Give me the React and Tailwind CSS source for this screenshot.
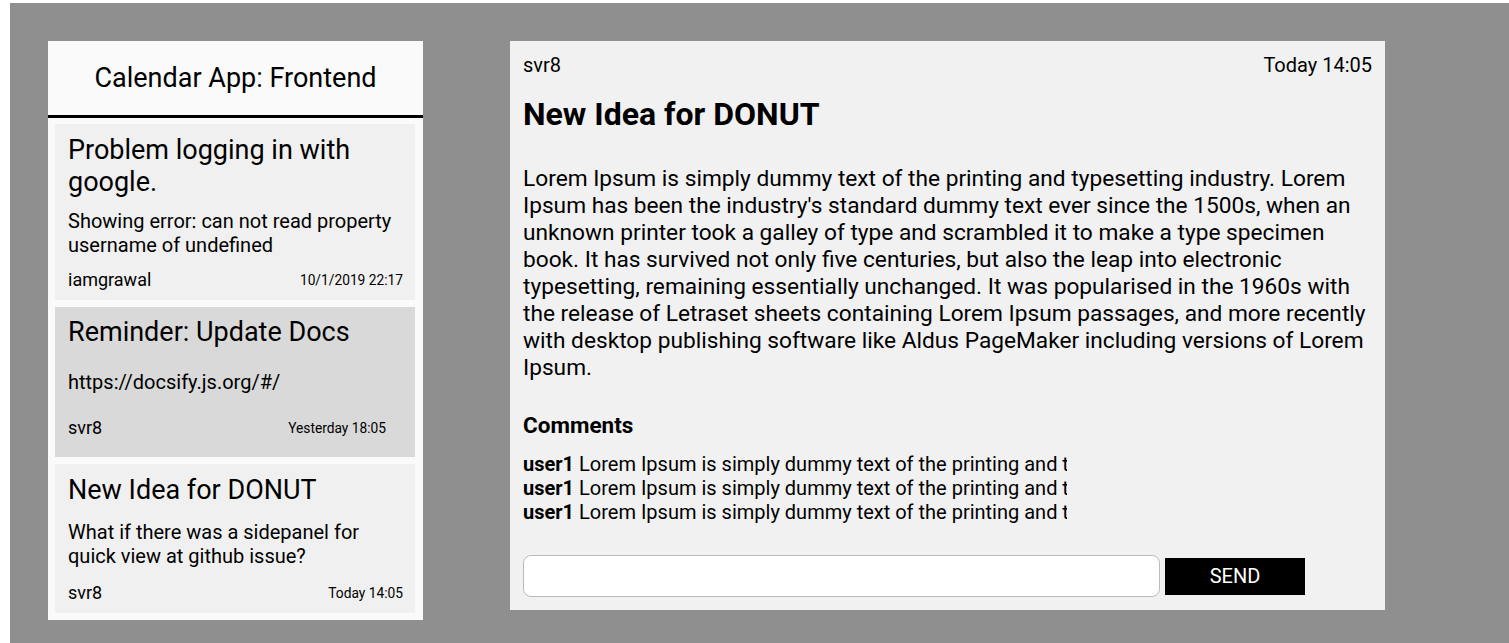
const issues = [
    {
        title: 'Problem logging in with google.',
        body: 'Showing error: can not read property username of undefined',
        author: 'iamgrawal',
        date: '10/1/2019 22:17',
        box: 'h-[176px] bg-[#f0f0f0] pt-[10px] pb-[8px]',
        datePad: 'pr-0'
    },
    {
        title: 'Reminder: Update Docs',
        body: 'https://docsify.js.org/#/',
        author: 'svr8',
        date: 'Yesterday 18:05',
        box: 'h-[150px] bg-[#d9d9d9] pt-[9px] pb-[17px]',
        datePad: 'pr-[17px]'
    },
    {
        title: 'New Idea for DONUT',
        body: 'What if there was a sidepanel for quick view at github issue?',
        author: 'svr8',
        date: 'Today 14:05',
        box: 'h-[149px] bg-[#f0f0f0] pt-[10px] pb-[8px]',
        datePad: 'pr-0'
    }
];

const lorem =
    "Lorem Ipsum is simply dummy text of the printing and typesetting industry. Lorem Ipsum has been the industry's standard dummy text ever since the 1500s, when an unknown printer took a galley of type and scrambled it to make a type specimen book. It has survived not only five centuries, but also the leap into electronic typesetting, remaining essentially unchanged. It was popularised in the 1960s with the release of Letraset sheets containing Lorem Ipsum passages, and more recently with desktop publishing software like Aldus PageMaker including versions of Lorem Ipsum.";

function IssueCard({issue}) {
    return (
        <div className={`${issue.box} flex flex-col justify-between pl-[13px] pr-[12px]`}>
            <div className="text-[27px] leading-[32px]">{issue.title}</div>
            <div className="text-[20px] leading-[24px]">{issue.body}</div>
            <div className="flex items-center justify-between">
                <span className="text-[18px] leading-[24px]">{issue.author}</span>
                <span className={`text-[13.75px] leading-[24px] ${issue.datePad}`}>{issue.date}</span>
            </div>
        </div>
    );
}

export default function App() {
    return (
        <div className="min-h-screen bg-white pl-[10px] pt-[3px] text-black font-['Roboto',_'Noto_Sans',_sans-serif]">
            <div className="bg-[#8f8f8f] h-[640px] flex items-start pl-[38px] pt-[38px] gap-[87px]">
                {/* sidebar */}
                <div className="w-[375px] bg-[#fafafa] pb-[7px]">
                    <div className="h-[77px] flex items-center justify-center text-[27px] border-b-[3px] border-black">
                        Calendar App: Frontend
                    </div>
                    <div className="flex flex-col gap-[7px] pt-[6px] pl-[7px] pr-[8px]">
                        {issues.map((issue) => (
                            <IssueCard key={issue.title} issue={issue} />
                        ))}
                    </div>
                </div>

                {/* detail panel */}
                <div className="w-[875px] h-[569px] bg-[#f1f1f1] px-[13px] pt-[12px]">
                    <div className="flex justify-between text-[20px] leading-[24px]">
                        <span>svr8</span>
                        <span>Today 14:05</span>
                    </div>
                    <h1 className="mt-[19px] text-[32px] leading-[36px] font-bold">New Idea for DONUT</h1>
                    <p className="mt-[33px] text-[22.7px] leading-[27px]">{lorem}</p>
                    <h2 className="mt-[30px] text-[22.5px] leading-[28px] font-bold">Comments</h2>
                    <div className="mt-[13px] w-[544px] text-[20px] leading-[24px]">
                        {[1, 2, 3].map((i) => (
                            <div key={i} className="whitespace-nowrap overflow-hidden">
                                <b>user1</b> Lorem Ipsum is simply dummy text of the printing and typesetting industry.
                            </div>
                        ))}
                    </div>
                    <div className="mt-[31px] flex items-center gap-[5px]">
                        <input
                            type="text"
                            className="w-[637px] h-[42px] bg-white border border-[#bbbbbb] rounded-[8px] px-3 outline-none"
                        />
                        <button className="w-[140px] h-[37px] bg-black text-white text-[20px]">SEND</button>
                    </div>
                </div>
            </div>
        </div>
    );
}
